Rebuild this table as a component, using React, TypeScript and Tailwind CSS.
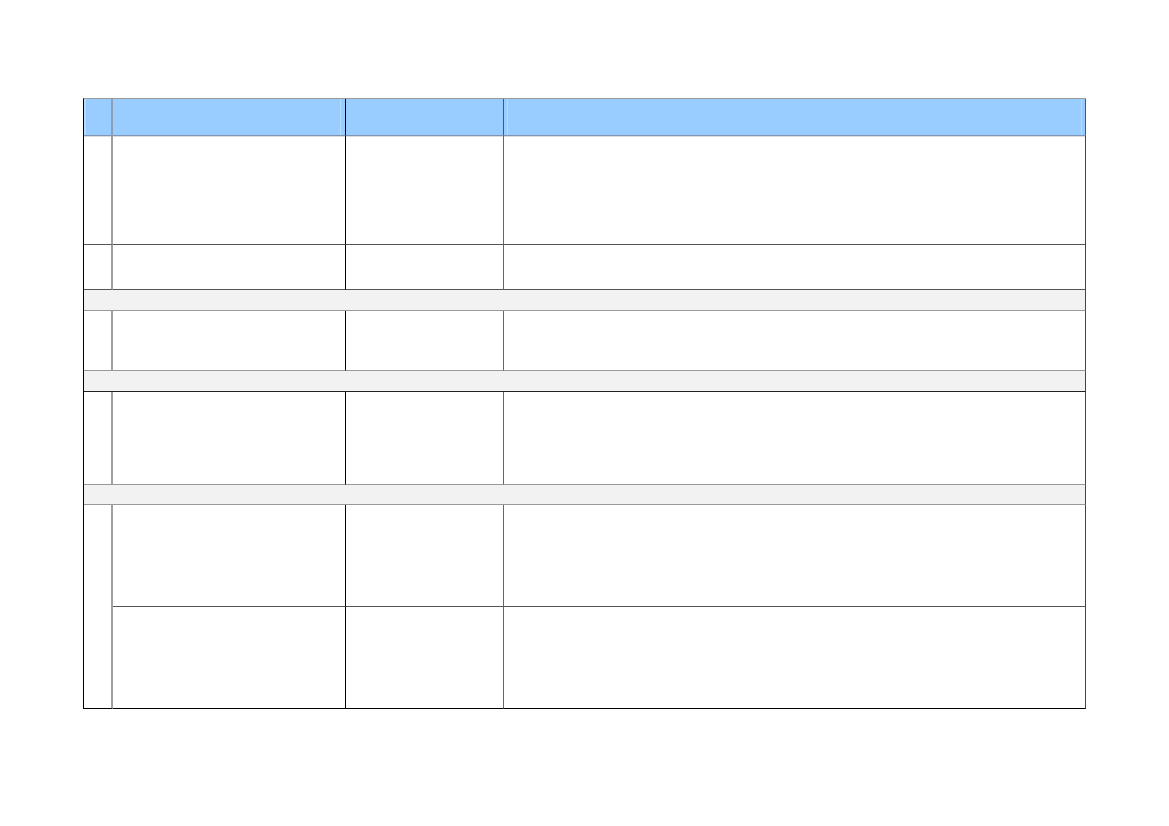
type Row = { h: string; bottom: string };

// plain rows between the header and the grey bands; heights include the bottom border
const groups: { rows: Row[]; band: string; bandBottom: string }[] = [
  { rows: [{ h: 'h-[109px]', bottom: 'border-b-[#555]' }, { h: 'h-[45px]', bottom: 'border-b-[#555]' }], band: 'h-[21px]', bandBottom: 'border-b-[#999]' },
  { rows: [{ h: 'h-[60px]', bottom: 'border-b-[#999]' }], band: 'h-[21px]', bandBottom: 'border-b-[#222]' },
  { rows: [{ h: 'h-[93px]', bottom: 'border-b-[#999]' }], band: 'h-[20px]', bandBottom: 'border-b-[#999]' },
];

function BodyCells({ h, extra = '' }: { h: string; extra?: string }) {
  return (
    <>
      <div className={`${h} ${extra} border-r-2 border-b border-r-[#a0a0a0]`} />
      <div className={`${h} ${extra} border-r border-b border-r-black`} />
      <div className={`${h} ${extra} border-r border-b border-r-[#666]`} />
      <div className={`${h} ${extra} border-r border-b border-r-[#444]`} />
    </>
  );
}

export default function App() {
  return (
    <div className="min-h-[826px] w-[1169px] bg-white pl-[83px] pt-[98px]">
      <div className="grid w-[1003px] grid-cols-[29px_233px_158px_582px] border-l border-t border-l-black border-t-[#9a9a9a]">
        {/* Header */}
        <div className="h-[37px] border-r-2 border-b border-r-[#8a9fb8] border-b-[#7f95b3] bg-[#99ccff] shadow-[inset_2px_0_0_#b5dbff]" />
        <div className="h-[37px] border-r border-b border-r-black border-b-[#7f95b3] bg-[#99ccff] shadow-[inset_-4px_0_0_#99ccff,inset_-5px_0_0_#b5dbff]" />
        <div className="h-[37px] border-r border-b border-r-[#555] border-b-[#7f95b3] bg-[#99ccff]" />
        <div className="h-[37px] border-r border-b border-r-[#555] border-b-[#7f95b3] bg-[#99ccff] shadow-[inset_3px_0_0_#99ccff,inset_4px_0_0_#b5dbff,inset_-3px_0_0_#99ccff,inset_-4px_0_0_#b5dbff]" />

        {groups.map((g, gi) => (
          <div key={gi} className="contents">
            {g.rows.map((r, ri) => (
              <BodyCells
                key={ri}
                h={r.h}
                extra={`${r.bottom} ${gi === 0 && ri === 0 ? 'shadow-[inset_0_1px_0_#dcdcdc]' : ''}`}
              />
            ))}
            <div className={`col-span-4 ${g.band} border-r border-b border-r-[#444] bg-[#f2f2f2] ${g.bandBottom}`} />
          </div>
        ))}

        {/* last two rows share the first column */}
        <div className="row-span-2 border-r-2 border-b border-r-[#a0a0a0] border-b-black" />
        <div className="h-[102px] border-r border-b border-r-black border-b-[#555]" />
        <div className="h-[102px] border-r border-b border-r-[#666] border-b-[#555]" />
        <div className="h-[102px] border-r border-b border-r-[#444] border-b-[#555]" />
        <div className="h-[102px] border-r border-b border-r-black border-b-black" />
        <div className="h-[102px] border-r border-b border-r-[#666] border-b-black" />
        <div className="h-[102px] border-r border-b border-r-[#444] border-b-black" />
      </div>
    </div>
  );
}
